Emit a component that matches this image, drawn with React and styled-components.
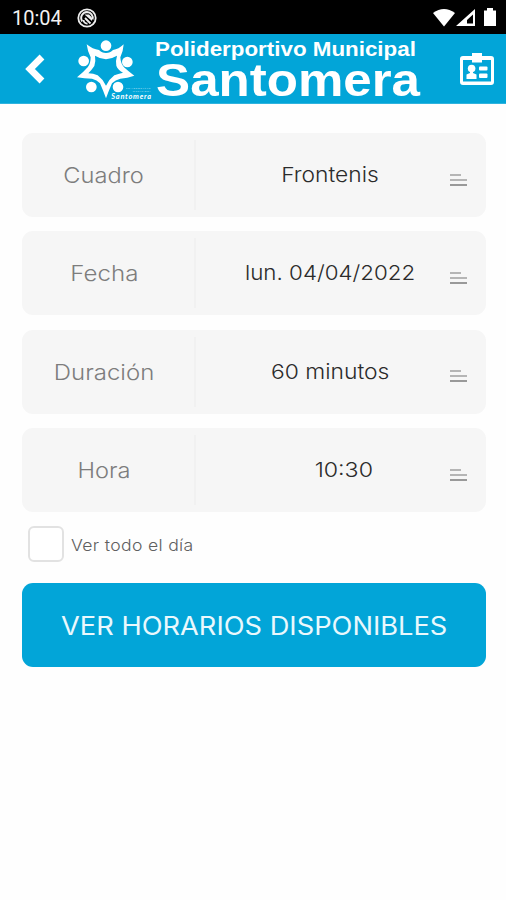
import styled, { createGlobalStyle } from "styled-components";

const fields = [
  { label: "Cuadro", value: "Frontenis", labelStretch: 1.1, stretch: 1.11 },
  { label: "Fecha", value: "lun. 04/04/2022", labelStretch: 1.12, stretch: 1.09 },
  { label: "Duración", value: "60 minutos", labelStretch: 1.115, stretch: 1.115 },
  { label: "Hora", value: "10:30", labelStretch: 1.1, stretch: 1.13, shift: 28 },
];

const Logo = () => (
  <LogoSvg viewBox="225 110 240 192">
    <path
      fill="#fff"
      fillRule="evenodd"
      d="M260 132Q278 147 297 149Q305 158 318 158Q331 158 339 149Q356 147 371 132Q370 151 361 171Q362 190 372 201Q386 214 403 226Q382 233 361 235Q346 239 336 249Q326 272 318 294Q310 272 300 249Q291 239 276 235Q253 235 231 231Q249 217 263 201Q272 190 272 171Q262 151 260 132ZM285 166Q288 184 283 197Q275 209 265 219Q280 219 293 225Q309 237 318 256Q327 237 343 225Q354 220 369 217Q353 208 349 196Q346 183 351 166Q334 176 318 177Q301 176 285 166Z"
    />
    <g fill="#fff">
      <circle cx="318" cy="136" r="16" />
      <circle cx="251" cy="182" r="16" />
      <circle cx="382" cy="185" r="16" />
      <circle cx="274" cy="260" r="16" />
      <circle cx="354" cy="260" r="16" />
    </g>
    <g fill="#fff" fontFamily="Lato, sans-serif" fontStyle="italic">
      <text x="378" y="265" fontSize="7" textLength="73" opacity="0.8">
        Polideportivo
      </text>
      <text x="398" y="274" fontSize="7" textLength="52" opacity="0.8">
        Municipal
      </text>
      <text x="334" y="296" fontSize="22" fontWeight="700" textLength="119">
        Santomera
      </text>
    </g>
  </LogoSvg>
);

const StatusBar = () => (
  <Status>
    <Clock>10:04</Clock>
    <svg width="20" height="20" viewBox="0 0 20 20" fill="none" stroke="#eee">
      <circle cx="10" cy="10" r="8.7" strokeWidth="1.8" />
      <path d="M5.2 13.4A6 6 0 0 1 10 4A6 6 0 0 1 15.6 11.5" strokeWidth="1.8" />
      <path d="M8 10L13.5 15.5M6.5 12a3.5 3.5 0 0 0 4 3.5" strokeWidth="1.8" />
      <path d="M7.5 6.5H12L15 9.5V13Z" fill="#eee" stroke="none" />
    </svg>
    <Signals width="64" height="20" viewBox="0 0 64 20">
      <path fill="#fff" d="M0 5Q11 -3 22 5L11 18.5Z" />
      <path fill="#fff" fillRule="evenodd" d="M23 18L42 1V18ZM34 15.5H40V6.5L34 12Z" />
      <path fill="#fff" d="M51 2.5h3V0h6v2.5h3V18H51z" />
    </Signals>
  </Status>
);

const Field = ({ label, value, labelStretch, stretch, shift }) => (
  <Row>
    <Label>
      <Wide $stretch={labelStretch}>{label}</Wide>
    </Label>
    <Value $shift={shift}>
      <Wide $stretch={stretch}>{value}</Wide>
    </Value>
    <Lines>
      <Line $short />
      <Line />
      <Line $dark />
    </Lines>
  </Row>
);

const App = () => {
  return (
    <Screen>
      <GlobalStyle />
      <StatusBar />
      <Header>
        <Back width="20" height="30" viewBox="0 0 20 30">
          <path d="M17 3L5 15L17 27" fill="none" stroke="#fff" strokeWidth="6.8" />
        </Back>
        <Logo />
        <Titles>
          <Subtitle>Poliderportivo Municipal</Subtitle>
          <Title>Santomera</Title>
        </Titles>
        <Badge width="36" height="34" viewBox="0 0 36 34" fill="#fff">
          <path
            fillRule="evenodd"
            d="M4 3H13V0H23V3H32Q35 3 35 6V29Q35 32 32 32H4Q1 32 1 29V6Q1 3 4 3ZM4 7V28.5H32V7H23V9.5H13V7Z"
          />
          <circle cx="12.6" cy="15.5" r="3.8" />
          <path d="M11 18H14V20L17.5 21.5V26H7.5V21.5L11 20Z" />
          <rect x="20" y="13.5" width="8.5" height="4" rx="1" />
          <rect x="20" y="20.5" width="8.5" height="4.5" rx="1" />
        </Badge>
      </Header>
      <Form>
        {fields.map((field) => (
          <Field key={field.label} {...field} />
        ))}
        <AllDay>
          <Checkbox />
          <AllDayText $stretch={1.1}>Ver todo el día</AllDayText>
        </AllDay>
        <Submit>
          <Wide $stretch={1.09}>VER HORARIOS DISPONIBLES</Wide>
        </Submit>
      </Form>
    </Screen>
  );
};
export default App;

const GlobalStyle = createGlobalStyle`
  * {
    box-sizing: border-box;
  }
  body {
    margin: 0;
    background: #fff;
    font-family: Inter, sans-serif;
  }
`;
const Screen = styled.div`
  width: 506px;
  height: 900px;
  overflow: hidden;
  background: #fefefe;
`;
const Wide = styled.span`
  display: inline-block;
  white-space: nowrap;
  transform: scaleX(${(props) => props.$stretch});
`;
const Status = styled.div`
  height: 34px;
  display: flex;
  align-items: center;
  padding: 1px 9px 0 12px;
  background: #000;
`;
const Clock = styled.span`
  width: 65px;
  color: #f2f2f2;
  font-family: Roboto, sans-serif;
  font-size: 20px;
  line-height: 34px;
`;
const Signals = styled.svg`
  margin-left: auto;
`;
const Header = styled.header`
  height: 70px;
  display: flex;
  align-items: flex-start;
  background: #02a5d8;
  border-bottom: 1px solid #2fb3de;
`;
const Back = styled.svg`
  flex: none;
  margin: 20px 0 0 25px;
`;
const LogoSvg = styled.svg`
  flex: none;
  width: 80px;
  height: 64px;
  margin: 3px 0 0 30px;
`;
const Titles = styled.div`
  width: 304px;
  color: #fff;
  font-family: "Liberation Sans", sans-serif;
  font-weight: 700;
  white-space: nowrap;
`;
const Subtitle = styled.div`
  height: 23px;
  padding-top: 4px;
  font-size: 20px;
  line-height: 23px;
  transform: scaleX(1.118);
  transform-origin: left;
`;
const Title = styled.div`
  font-size: 46px;
  line-height: 46px;
  padding-left: 1px;
  transform: scaleX(1.11);
  transform-origin: left;
`;
const Badge = styled.svg`
  flex: none;
  margin-top: 19px;
`;
const Form = styled.main`
  display: flex;
  flex-direction: column;
  gap: 14.4px;
  padding: 29px 20px 0 22px;
`;
const Row = styled.div`
  height: 84px;
  display: flex;
  align-items: center;
  background: #f6f6f6;
  border-radius: 11px;
`;
const Label = styled.div`
  width: 174px;
  height: 70px;
  padding-right: 8px;
  border-right: 2px solid #f1f1f1;
  color: #7d7d7d;
  font-size: 21.5px;
  font-weight: 300;
  line-height: 71px;
  text-align: center;
`;
const Value = styled.div`
  width: 254px;
  padding-left: ${(props) => 14 + (props.$shift || 0)}px;
  color: #2b2b2b;
  font-size: 20.5px;
  font-weight: 300;
  line-height: 72px;
  text-align: center;
`;
const Lines = styled.div`
  display: flex;
  flex-direction: column;
  gap: 3px;
  margin-top: 9px;
`;
const Line = styled.div`
  width: ${(props) => (props.$short ? 11 : 17)}px;
  height: 2px;
  background: ${(props) => (props.$dark ? "#999" : "#b5b5b5")};
`;
const AllDay = styled.div`
  height: 35px;
  display: flex;
  align-items: center;
  gap: 7px;
  padding-left: 6px;
`;
const Checkbox = styled.span`
  width: 36px;
  height: 36px;
  border: 2px solid #e2e2e2;
  border-radius: 6px;
  background: #fff;
`;
const AllDayText = styled(Wide)`
  padding-top: 1px;
  color: #606060;
  font-size: 16px;
  font-weight: 300;
  letter-spacing: 0.3px;
  transform-origin: left;
`;
const Submit = styled.button`
  height: 84px;
  margin-top: 7px;
  padding: 2px 0 0;
  border: 0;
  border-radius: 11px;
  background: #02a5d8;
  color: #e9f8fd;
  font-family: inherit;
  font-size: 25px;
  font-weight: 400;
`;
